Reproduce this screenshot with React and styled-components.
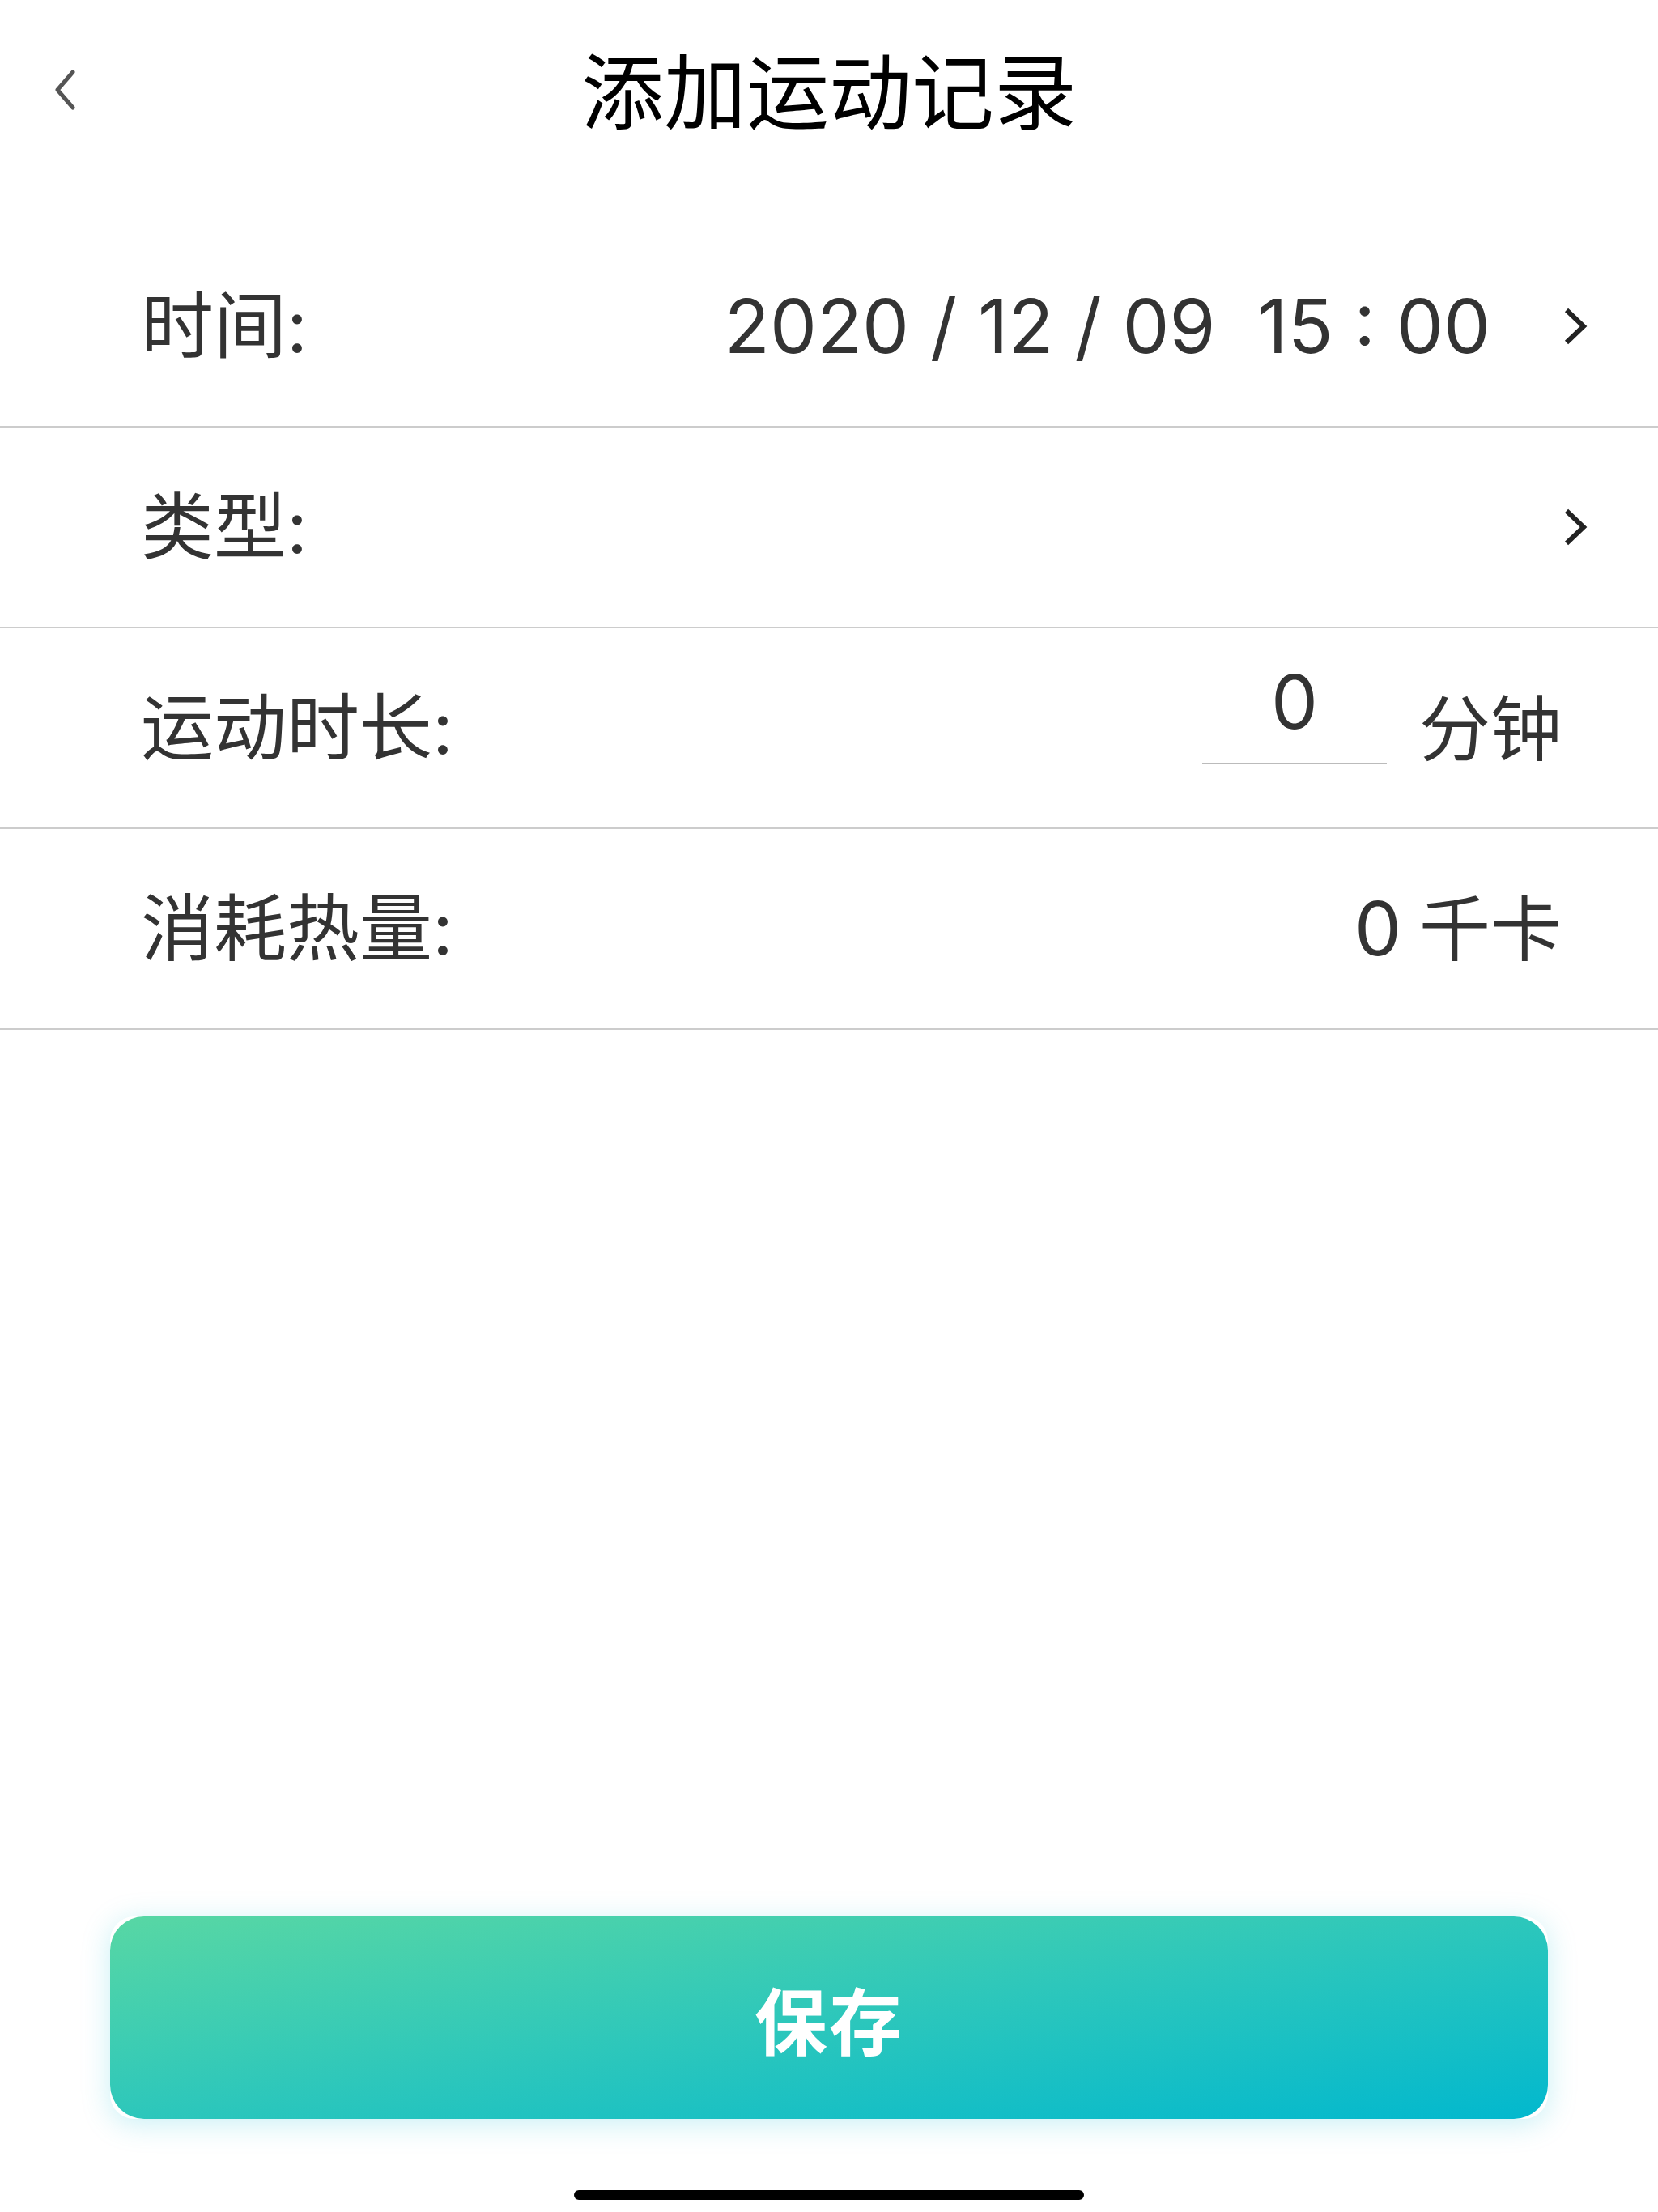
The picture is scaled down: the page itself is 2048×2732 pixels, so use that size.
import React from "react";
import styled, { createGlobalStyle } from "styled-components";

/* ======================
   GLOBAL
====================== */

const GlobalStyle = createGlobalStyle`
  html, body {
    margin: 0;
    padding: 0;
    background: #ffffff;
  }
  body {
    font-family: Inter, "Noto Sans CJK SC", sans-serif;
    -webkit-font-smoothing: antialiased;
  }
  * {
    box-sizing: border-box;
  }
`;

/* ======================
   LAYOUT
====================== */

const Page = styled.div`
  width: 2048px;
  min-height: 2732px;
  display: flex;
  flex-direction: column;
  background: #ffffff;
`;

const Header = styled.header`
  height: 230px;
  display: grid;
  grid-template-columns: 200px 1fr 200px;
  align-items: center;
`;

const BackButton = styled.button`
  width: 100px;
  height: 100px;
  margin: 0 0 8px 30px;
  padding: 0;
  border: none;
  background: none;
  display: flex;
  align-items: center;
  justify-content: center;
  color: #555555;
`;

const Title = styled.h1`
  margin: 0;
  text-align: center;
  font-size: 102px;
  font-weight: 400;
  color: #000000;
  line-height: 1;
`;

const List = styled.div`
  margin-top: 50px;
  display: flex;
  flex-direction: column;
`;

const Row = styled.div`
  height: 248px;
  display: flex;
  align-items: center;
  justify-content: space-between;
  padding: 0 ${(p) => (p.$arrow ? "87px" : "119px")} 0 174px;
  border-bottom: 2px solid #cccccc;
`;

const Label = styled.span`
  font-size: 90px;
  color: #333333;
  line-height: 1;
`;

const Value = styled.span`
  display: flex;
  align-items: center;
  gap: ${(p) => p.$gap || "0px"};
  font-size: ${(p) => p.$size || "92px"};
  color: #333333;
  line-height: 1;
  white-space: pre;
`;

const Unit = styled.span`
  font-size: 88px;
  line-height: 88px;
  color: #333333;
`;

const DurationGroup = styled.div`
  display: flex;
  align-items: flex-end;
  gap: 40px;
  padding-bottom: 28px;
`;

const DurationInput = styled.input`
  width: 228px;
  height: 118px;
  padding: 0 0 36px;
  border: none;
  border-bottom: 2px solid #bbbbbb;
  outline: none;
  background: transparent;
  text-align: center;
  font-family: Inter, "Noto Sans CJK SC", sans-serif;
  font-size: 92px;
  line-height: 80px;
  color: #333333;
`;

const Arrow = styled.span`
  display: flex;
  color: #222222;
  margin-left: ${(p) => p.$offset || "0px"};
`;

const Spacer = styled.div`
  flex: 1;
`;

const Footer = styled.div`
  display: flex;
  flex-direction: column;
  align-items: center;
  padding-bottom: 15px;
`;

const SaveFrame = styled.div`
  width: 1776px;
  height: 250px;
  border-radius: 30px;
  background: #ffffff;
  box-shadow: 0 6px 36px rgba(0, 186, 210, 0.22);
`;

const SaveButton = styled.button`
  width: 100%;
  height: 100%;
  border: none;
  border-radius: 42px;
  background: linear-gradient(to bottom right, #58d7a4 0%, #2dc7bb 50%, #02b8ce 100%);
  color: #ffffff;
  font-family: Inter, "Noto Sans CJK SC", sans-serif;
  font-size: 90px;
  font-weight: 700;
  letter-spacing: 2px;
  cursor: pointer;
`;

const HomeIndicator = styled.div`
  margin-top: 88px;
  width: 630px;
  height: 12px;
  border-radius: 6px;
  background: #000000;
`;

/* ======================
   ICONS
====================== */

const ChevronLeft = () => (
  <svg width="28" height="50" viewBox="0 0 28 50" fill="none">
    <path
      d="M24 3 L5 25 L24 47"
      stroke="currentColor"
      strokeWidth="5"
      strokeLinecap="round"
      strokeLinejoin="round"
    />
  </svg>
);

const ChevronRight = () => (
  <svg width="30" height="48" viewBox="0 0 30 48" fill="none">
    <path d="M4 4 L25 24 L4 44" stroke="currentColor" strokeWidth="6" />
  </svg>
);

/* ======================
   APP
====================== */

const App = () => {
  return (
    <>
      <GlobalStyle />
      <Page>
        <Header>
          <BackButton aria-label="返回">
            <ChevronLeft />
          </BackButton>
          <Title>添加运动记录</Title>
          <div />
        </Header>

        <List>
          <Row $arrow>
            <Label>时间:</Label>
            <Value $size="92px">
              {"2020 / 12 / 09  15 : 00"}
              <Arrow $offset="90px">
                <ChevronRight />
              </Arrow>
            </Value>
          </Row>

          <Row $arrow>
            <Label>类型:</Label>
            <Arrow>
              <ChevronRight />
            </Arrow>
          </Row>

          <Row>
            <Label>运动时长:</Label>
            <DurationGroup>
              <DurationInput defaultValue="0" />
              <Unit>分钟</Unit>
            </DurationGroup>
          </Row>

          <Row>
            <Label>消耗热量:</Label>
            <Value $gap="22px">
              <span>0</span>
              <Unit>千卡</Unit>
            </Value>
          </Row>
        </List>

        <Spacer />

        <Footer>
          <SaveFrame>
            <SaveButton>保存</SaveButton>
          </SaveFrame>
          <HomeIndicator />
        </Footer>
      </Page>
    </>
  );
};

export default App;
